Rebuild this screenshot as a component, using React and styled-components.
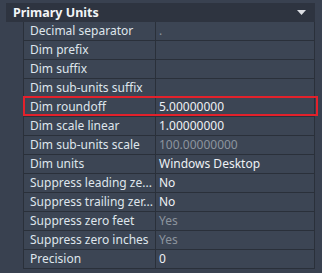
import React from "react";
import styled, { createGlobalStyle } from "styled-components";

const Global = createGlobalStyle`
  html, body { margin: 0; padding: 0; background: #394150; }
  body { font-family: "Noto Sans", "Open Sans", sans-serif; font-size: 12px; color: #dfe5ec; }
`;

const Panel = styled.div`
  padding: 3px 0 0 6px;
  width: 309px;
`;

const Header = styled.div`
  height: 19px;
  background: #2e3440;
  display: flex;
  align-items: center;
  justify-content: space-between;
  padding: 0 9px 0 7px;
  font-weight: 700;
  color: #f2f4f7;
  font-size: 12.5px;
`;

const Rows = styled.div`
  margin-left: 17px;
  border-right: 1px solid #2a303a;
  width: 291px;
`;

const Row = styled.div`
  position: relative;
  display: grid;
  grid-template-columns: 133px 1fr;
  height: 18px;
  border-bottom: 1px solid #2a303a;
  background: #3c4554;
  ${(p) =>
    p.$highlight &&
    `
    &::after {
      content: "";
      position: absolute;
      left: 0;
      right: -4px;
      top: -2px;
      bottom: 0;
      border: 2px solid #e3212b;
      pointer-events: none;
    }
  `}
`;

const Label = styled.div`
  border-left: 1px solid #2a303a;
  border-right: 1px solid #2a303a;
  padding-left: 6px;
  line-height: 18px;
  white-space: nowrap;
  overflow: hidden;
  color: #dfe5ec;
`;

const Value = styled.div`
  padding-left: 3px;
  line-height: 18px;
  white-space: nowrap;
  color: ${(p) => (p.$dim ? "#8c949e" : "#eef1f5")};
`;

const rows = [
  ["Decimal separator", ".", true],
  ["Dim prefix", ""],
  ["Dim suffix", ""],
  ["Dim sub-units suffix", ""],
  ["Dim roundoff", "5.00000000", false, true],
  ["Dim scale linear", "1.00000000"],
  ["Dim sub-units scale", "100.00000000", true],
  ["Dim units", "Windows Desktop"],
  ["Suppress leading ze...", "No"],
  ["Suppress trailing zer...", "No"],
  ["Suppress zero feet", "Yes", true],
  ["Suppress zero inches", "Yes", true],
  ["Precision", "0"],
];

const Caret = () => (
  <svg width="9" height="5" viewBox="0 0 9 5">
    <path d="M0 0H9L4.5 5Z" fill="#dcdfe4" />
  </svg>
);

export default function App() {
  return (
    <>
      <Global />
      <Panel>
        <Header>
          <span>Primary Units</span>
          <Caret />
        </Header>
        <Rows>
          {rows.map(([l, v, dim, hl]) => (
            <Row key={l} $highlight={hl}>
              <Label>{l}</Label>
              <Value $dim={dim}>{v}</Value>
            </Row>
          ))}
        </Rows>
      </Panel>
    </>
  );
}
